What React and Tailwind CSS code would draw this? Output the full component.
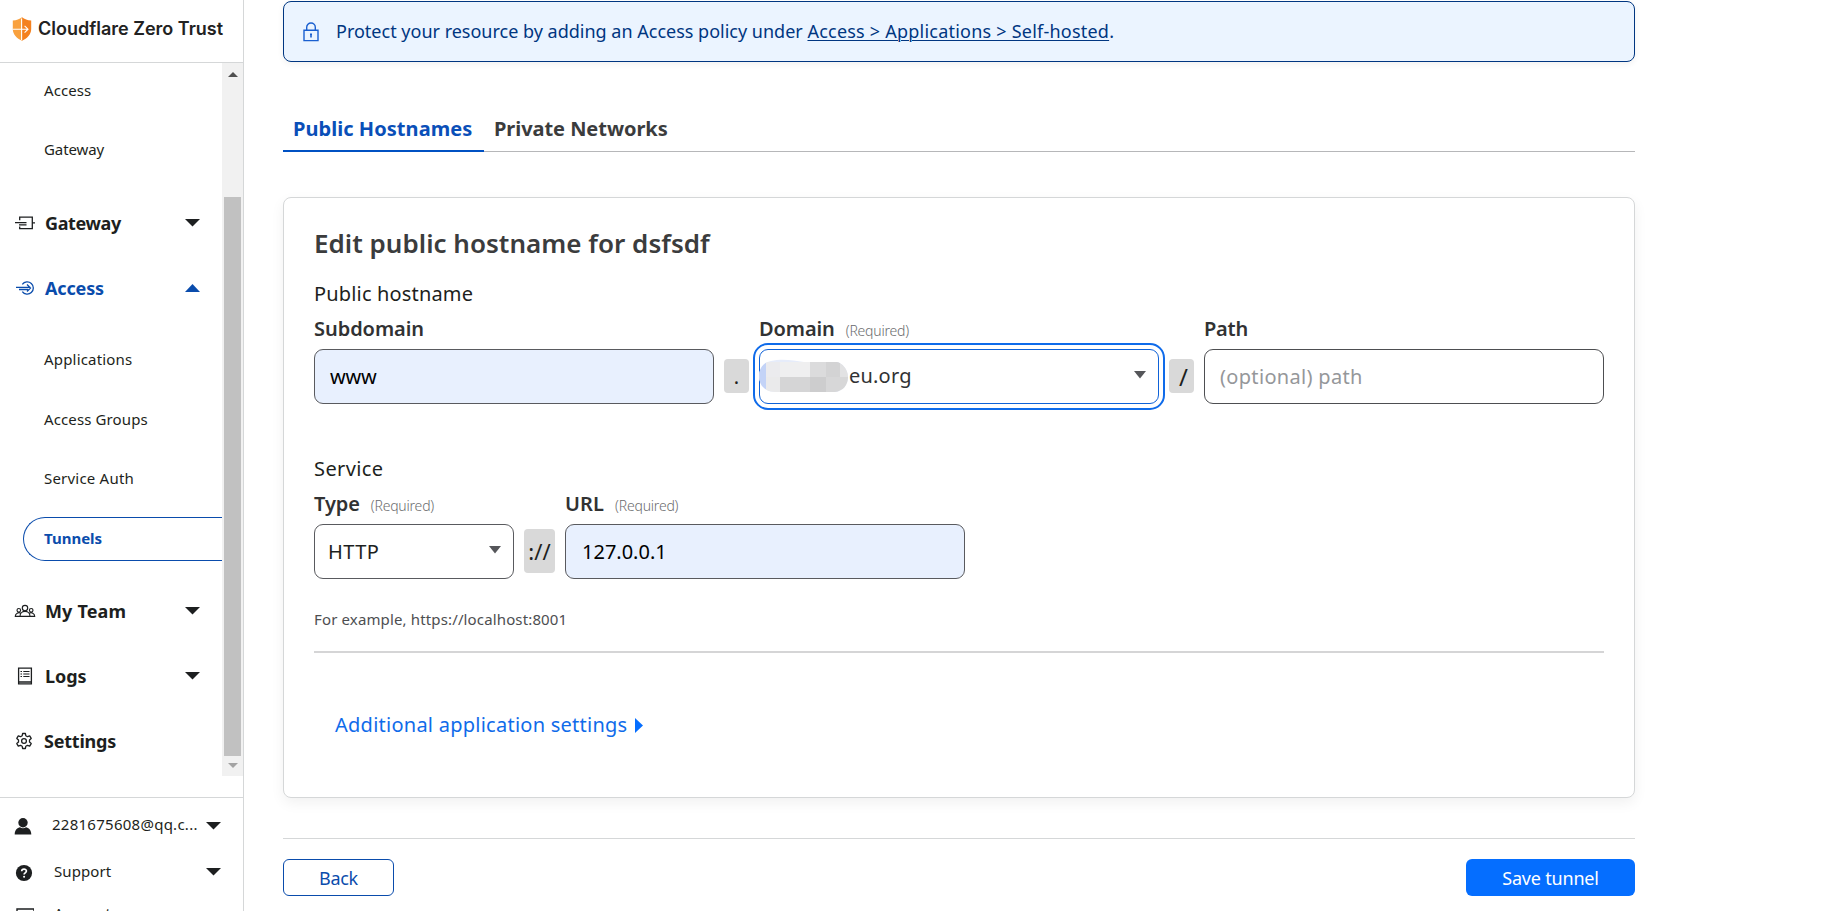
import React from "react";

const ink = "#1d1f20";

function Caret({ up, color = ink }) {
  return (
    <svg width="15" height="8" viewBox="0 0 15 8" className="shrink-0">
      <path d={up ? "M0 8L7.5 0L15 8Z" : "M0 0H15L7.5 7.5Z"} fill={color} />
    </svg>
  );
}

function SmallCaret() {
  return (
    <svg width="12" height="8" viewBox="0 0 12 8" className="-mt-[3px] shrink-0">
      <path d="M0 0H12L6 7.5Z" fill="#55565a" />
    </svg>
  );
}

function ShieldLogo() {
  return (
    <svg width="20" height="24" viewBox="0 0 20 24" className="shrink-0">
      <path d="M10 0.3C7.6 2.2 4.5 3.4 0.8 3.6V12c0 5.600 4 9.300 9.200 11.700z" fill="#f9a13e" />
      <path d="M10 0.3c2.400 1.900 5.500 3.100 9.200 3.300V12c0 5.600-4 9.300-9.200 11.700z" fill="#f4811f" />
      <path d="M0.800 12.200H16M12.600 8.800L16 12.200L12.600 15.600M9.600 1.500V23" fill="none" stroke="#fff" strokeWidth="1.100" />
    </svg>
  );
}

function GatewayIcon() {
  return (
    <svg width="22" height="16" viewBox="0 0 22 16" fill="none" stroke={ink} strokeWidth="1.300">
      <path d="M5.700 5.200V2.200H18.300V13.700H5.700V11.600M18.300 7.900H21M1 7.600H12.500M5 9.900H12.500" />
    </svg>
  );
}

function AccessIcon() {
  return (
    <svg width="22" height="16" viewBox="0 0 22 16" fill="none" stroke="#0a4cac" strokeWidth="1.300">
      <path d="M8.300 4.400A6.100 6.100 0 1 1 8.300 11.600M2 7.400H16.500M5 9.500H14M13 4.500L16.500 8L13 11.500" />
    </svg>
  );
}

function TeamIcon() {
  return (
    <svg width="22" height="16" viewBox="0 0 22 16" fill="none" stroke={ink} strokeWidth="1.150">
      <circle cx="11" cy="5" r="2.700" />
      <circle cx="4.800" cy="7.300" r="1.800" />
      <circle cx="17.200" cy="7.300" r="1.800" />
      <path d="M6 13.300C6 6.800 16 6.800 16 13.300ZM6 13.300H1.300C1.300 10.300 4.500 8.900 6.900 10.200M16 13.300H20.700C20.700 10.300 17.500 8.900 15.100 10.200" />
    </svg>
  );
}

function LogsIcon() {
  return (
    <svg width="22" height="18" viewBox="0 0 22 18" fill="none" stroke={ink} strokeWidth="1.300">
      <path d="M4.600 1.200H17.400V16.800H4.600ZM4.600 15H17.400" />
      <path d="M9.300 4.500H15.500M9.300 7H15.500M9.300 9.500H15.500M6.500 4.500H8M6.500 7H8M6.500 9.500H8" strokeWidth="1.100" />
    </svg>
  );
}

function GearIcon() {
  return (
    <svg width="22" height="18" viewBox="0 0 22 18" fill="none" stroke={ink} strokeWidth="1.300" strokeLinejoin="round">
      <path d="M8.600 1.500H11.400L11.800 3.700L13.500 4.700L15.700 3.900L17.200 6.400L15.500 7.900V10.100L17.200 11.600L15.700 14.100L13.500 13.300L11.800 14.300L11.400 16.500H8.600L8.200 14.300L6.500 13.300L4.300 14.100L2.800 11.600L4.500 10.100V7.900L2.800 6.400L4.300 3.900L6.500 4.700L8.200 3.700Z" />
      <circle cx="10" cy="9" r="2.400" />
    </svg>
  );
}

function NavGroup({ icon, label, tracking, active, caret = true }) {
  return (
    <div className={"flex h-[65px] shrink-0 items-center pl-[14px] pr-[22px] " + (active ? "text-[#0a4cac]" : "text-[#1d1f20]")}>
      <span className="-mt-px flex w-[22px] shrink-0">{icon}</span>
      <span className={"-mt-[2px] flex-1 text-[18px] font-bold leading-6 " + (caret ? "ml-[9px] " : "ml-2 ") + tracking}>{label}</span>
      {caret && <span className="-mt-[2px]"><Caret up={active} color={active ? "#0a4cac" : ink} /></span>}
    </div>
  );
}

function NavItem({ label, className }) {
  return <div className={"flex shrink-0 items-center pl-[44px] text-[15px] text-[#1d1f20] " + className}>{label}</div>;
}

function Sidebar() {
  return (
    <aside className="flex h-[911px] w-[244px] shrink-0 flex-col overflow-hidden border-r border-[#d5d7d8] bg-white">
      <header className="flex h-[63px] shrink-0 items-center border-b border-[#d5d7d8] pb-[5px] pl-[12px]">
        <ShieldLogo />
        <span className="ml-[6px] whitespace-nowrap font-['Inter',sans-serif] text-[18px] font-semibold text-[#222]">Cloudflare Zero Trust</span>
      </header>
      <div className="flex h-[713px] shrink-0">
        <nav className="flex w-[222px] flex-col overflow-hidden">
          <NavItem label="Access" className="h-[56px] pb-[2px] tracking-[0.07px]" />
          <NavItem label="Gateway" className="h-[62px] pb-[2px] tracking-[-0.1px]" />
          <div className="mt-[10px]">
            <NavGroup icon={<GatewayIcon />} label="Gateway" tracking="tracking-[-0.37px]" />
            <NavGroup icon={<AccessIcon />} label="Access" tracking="tracking-[-0.16px]" active />
          </div>
          <div className="mt-2 flex flex-col">
            <NavItem label="Applications" className="h-[60px] tracking-[0.18px]" />
            <NavItem label="Access Groups" className="h-[60px] tracking-[0.12px]" />
            <NavItem label="Service Auth" className="h-[58px] tracking-[0.21px]" />
            <div className="ml-[23px] mt-[10px] flex h-[44px] items-center rounded-l-full border border-r-0 border-[#0a4cac] pb-px pl-[20px] text-[15px] font-bold text-[#0a4cac]">Tunnels</div>
          </div>
          <div className="mt-[18px]">
            <NavGroup icon={<TeamIcon />} label="My Team" tracking="tracking-[0.15px]" />
            <NavGroup icon={<LogsIcon />} label="Logs" tracking="tracking-[-0.06px]" />
            <NavGroup icon={<GearIcon />} label="Settings" tracking="tracking-[-0.22px]" caret={false} />
          </div>
        </nav>
        <div className="flex w-[21px] flex-col items-center bg-[#f1f1f1]">
          <svg width="10" height="5" viewBox="0 0 10 5" className="mt-[9px] shrink-0"><path d="M0 5L5 0L10 5Z" fill="#505050" /></svg>
          <div className="mt-[120px] h-[559px] w-[17px] shrink-0 bg-[#c1c1c1]" />
          <svg width="10" height="5" viewBox="0 0 10 5" className="mt-[7px] shrink-0"><path d="M0 0H10L5 5Z" fill="#a3a3a3" /></svg>
        </div>
      </div>
      <footer className="mt-[21px] shrink-0 border-t border-[#d5d7d8] pl-[14px] pr-[22px] text-[15px] text-[#1d1f20]">
        <div className="flex h-[52px] items-center">
          <svg width="20" height="18" viewBox="0 0 20 18" className="mt-[6px] shrink-0" fill={ink}>
            <circle cx="9" cy="4.800" r="4.700" />
            <path d="M0.700 16.500C0.700 12 3.500 9.800 6 9.300C7.800 10.700 10.200 10.700 12 9.300C14.500 9.800 17.300 12 17.300 16.500Z" />
          </svg>
          <span className="ml-[18px] flex-1 whitespace-nowrap tracking-[0.26px]">2281675608@qq.c...</span>
          <span className="mt-[3px]"><Caret /></span>
        </div>
        <div className="flex h-[42px] items-center">
          <svg width="20" height="18" viewBox="0 0 20 18" className="mt-[4px] shrink-0">
            <circle cx="10" cy="9" r="8.100" fill={ink} />
            <path d="M7.700 7.300C7.700 4.300 12.400 4.400 12.400 7.100C12.400 8.900 10.100 8.800 10.100 10.500" fill="none" stroke="#fff" strokeWidth="1.700" />
            <circle cx="10.100" cy="12.700" r="1.050" fill="#fff" />
          </svg>
          <span className="ml-[20px] flex-1 tracking-[0.1px]">Support</span>
          <span className="mt-[2px]"><Caret /></span>
        </div>
        <div className="flex h-[42px] items-center">
          <svg width="20" height="16" viewBox="0 0 20 16" className="mt-[5px] shrink-0" fill="none" stroke={ink} strokeWidth="1.400">
            <path d="M3 1H20V14H3Z" />
          </svg>
          <span className="ml-[20px]">Account</span>
        </div>
      </footer>
    </aside>
  );
}

function Label({ children, required, tracking = "" }) {
  return (
    <div className="flex h-7 items-baseline pt-px leading-7">
      <span className={"text-[20px] font-semibold text-[#313233] " + tracking}>{children}</span>
      {required && <span className="ml-[11px] text-[14px] font-light leading-none tracking-[-0.2px] text-[#6b6c6e]">(Required)</span>}
    </div>
  );
}

const box = "mt-[7px] flex h-[55px] items-center rounded-[9px] border text-[20px] ";

function Separator({ children, className }) {
  return <div className={"flex shrink-0 items-center justify-center self-end rounded-[4px] bg-[#d9d9d9] text-[#1d1f20] " + className}>{children}</div>;
}

function PixelBlur() {
  return (
    <svg width="89" height="34" viewBox="0 0 89 34" className="-ml-px mb-[2px] shrink-0">
      <clipPath id="blob"><path d="M12 2C22 -0.500 34 1 45 3H78C83 4 89 10 89 18C89 26 84 32 76 33H16C6 33 0 26 0 17C0 9 5 3 12 2Z" /></clipPath>
      <g clipPath="url(#blob)">
        <rect width="89" height="34" fill="#e6ecfa" />
        <rect width="7" height="34" fill="#c3d3f7" />
        <rect x="7" y="3" width="14" height="15" fill="#ebebee" />
        <rect x="21" y="3" width="30" height="15" fill="#efeff0" />
        <rect x="51" y="3" width="16" height="15" fill="#dbdbdc" />
        <rect x="67" y="3" width="14" height="15" fill="#d3d3d4" />
        <rect x="81" y="3" width="8" height="15" fill="#e2e2e3" />
        <rect x="7" y="18" width="14" height="16" fill="#eaeaeb" />
        <rect x="21" y="18" width="30" height="16" fill="#d5d5d6" />
        <rect x="51" y="18" width="16" height="16" fill="#cdcdce" />
        <rect x="67" y="18" width="22" height="16" fill="#d7d7d8" />
      </g>
    </svg>
  );
}

function HostnameCard() {
  return (
    <section className="mt-[45px] h-[601px] rounded-[8px] border border-[#d5d7d8] bg-white pl-[30px] pr-[30px] pt-[28px] shadow-[0_5px_14px_rgba(0,0,0,0.06)]">
      <h2 className="h-[34px] text-[26px] font-semibold leading-[34px] tracking-[0.02px] text-[#3b3c3d]">Edit public hostname for dsfsdf</h2>
      <p className="mt-[19px] h-7 pt-px text-[20px] leading-7 tracking-[0.16px] text-[#1d1f20]">Public hostname</p>
      <div className="mt-[7px] flex">
        <div className="w-[400px]">
          <Label tracking="tracking-[-0.05px]">Subdomain</Label>
          <div className={box + "border-[#595a5e] bg-[#e8f0fe] pl-[15px] tracking-[-0.2px] text-black"}>www</div>
        </div>
        <Separator className="mb-[11px] ml-[10px] h-[34px] w-[25px] pt-[2px] text-[20px]">.</Separator>
        <div className="ml-[10px] w-[400px]">
          <Label required tracking="tracking-[-0.1px]">Domain</Label>
          <div className={box + "justify-between border-[#0f62d8] bg-white pr-[12px] text-[#313233] outline-2 outline-offset-[4px] outline-[#0f6bea]"}>
            <div className="flex items-center">
              <PixelBlur />
              <span className="ml-px pb-px tracking-[0.2px]">eu.org</span>
            </div>
            <SmallCaret />
          </div>
        </div>
        <Separator className="mb-[11px] ml-[10px] h-[34px] w-[25px] pl-1 pt-px text-[24px]">/</Separator>
        <div className="ml-[10px] w-[400px]">
          <Label tracking="tracking-[-0.2px]">Path</Label>
          <div className={box + "border-[#4d4e51] bg-white pl-[15px] tracking-[0.32px] text-[#95979a]"}>(optional) path</div>
        </div>
      </div>

      <p className="mt-[50px] h-7 pt-px text-[20px] leading-7 tracking-[0.4px] text-[#1d1f20]">Service</p>
      <div className="mt-[7px] flex">
        <div className="w-[200px]">
          <Label required tracking="tracking-[-0.1px]">Type</Label>
          <div className={box + "justify-between border-[#595a5e] bg-white pl-[13px] pr-[12px] tracking-[0.4px] text-[#1d1f20]"}>
            HTTP
            <SmallCaret />
          </div>
        </div>
        <Separator className="mb-[6px] ml-[10px] h-[44px] w-[31px] pt-px text-[22px]">://</Separator>
        <div className="ml-[10px] w-[400px]">
          <Label required tracking="tracking-[0.1px]">URL</Label>
          <div className={box + "border-[#595a5e] bg-[#e8f0fe] pl-[16px] text-black"}>127.0.0.1</div>
        </div>
      </div>
      <p className="mt-[30px] h-5 text-[15px] leading-5 tracking-[0.14px] text-[#4d4e51]">For example, https://localhost:8001</p>
      <div className="mt-[22px] h-[2px] bg-[#d5d5d6]" />
      <div className="mt-[58px] flex h-7 items-center pl-[21px] text-[20px] leading-7 tracking-[0.25px] text-[#0f6bea]">
        Additional application settings
        <svg width="8" height="15" viewBox="0 0 8 15" className="ml-2 shrink-0"><path d="M0 0L8 7.500L0 15Z" fill="#056eff" /></svg>
      </div>
    </section>
  );
}

export default function App() {
  return (
    <div className="flex h-[911px] w-full overflow-hidden bg-white font-['Noto_Sans',sans-serif]">
      <Sidebar />
      <main className="ml-[39px] w-[1352px] shrink-0 pt-px">
        <div className="flex h-[61px] items-center rounded-[8px] border border-[#003681] bg-[#ebf4ff] pl-[19px] text-[18px] text-[#003681] shadow-[0_2px_6px_rgba(0,0,0,0.06)]">
          <svg width="16" height="20" viewBox="0 0 16 20" fill="none" stroke="#1a5fd0" strokeWidth="1.400">
            <path d="M1 8.200H15V18.600H1ZM3.700 8.200V5.300A4.300 4.300 0 0 1 12.300 5.300V8.200" />
            <path d="M8 12V15.500M7 12.200H9" strokeWidth="1.600" />
          </svg>
          <span className="ml-[17px] whitespace-pre">Protect your resource by adding an Access policy under </span>
          <span className="tracking-[0.22px] underline decoration-1 underline-offset-2">Access &gt; Applications &gt; Self-hosted</span>
          <span>.</span>
        </div>

        <div className="mt-[43px] flex h-[47px] pt-px text-[20px] font-bold leading-[46px] shadow-[inset_0_-1px_0_#b6b7b9]">
          <div className="-mt-px w-[201px] whitespace-nowrap pl-[10px] pt-px tracking-[0.05px] text-[#0a4fb8] shadow-[inset_0_-2px_0_#0051c3]">Public Hostnames</div>
          <div className="pl-[10px] tracking-[-0.05px] text-[#3b3c3d]">Private Networks</div>
        </div>

        <HostnameCard />

        <div className="mt-[40px] flex justify-between border-t border-[#d5d7d8] pt-5 text-[18px]">
          <button className="flex h-[37px] w-[111px] items-center justify-center rounded-[6px] border border-[#0a4cac] bg-white pt-px tracking-[-0.3px] text-[#0a4cac]">Back</button>
          <button className="flex h-[37px] w-[169px] items-center justify-center rounded-[6px] bg-[#056eff] pt-px tracking-[-0.2px] text-white">Save tunnel</button>
        </div>
      </main>
    </div>
  );
}
